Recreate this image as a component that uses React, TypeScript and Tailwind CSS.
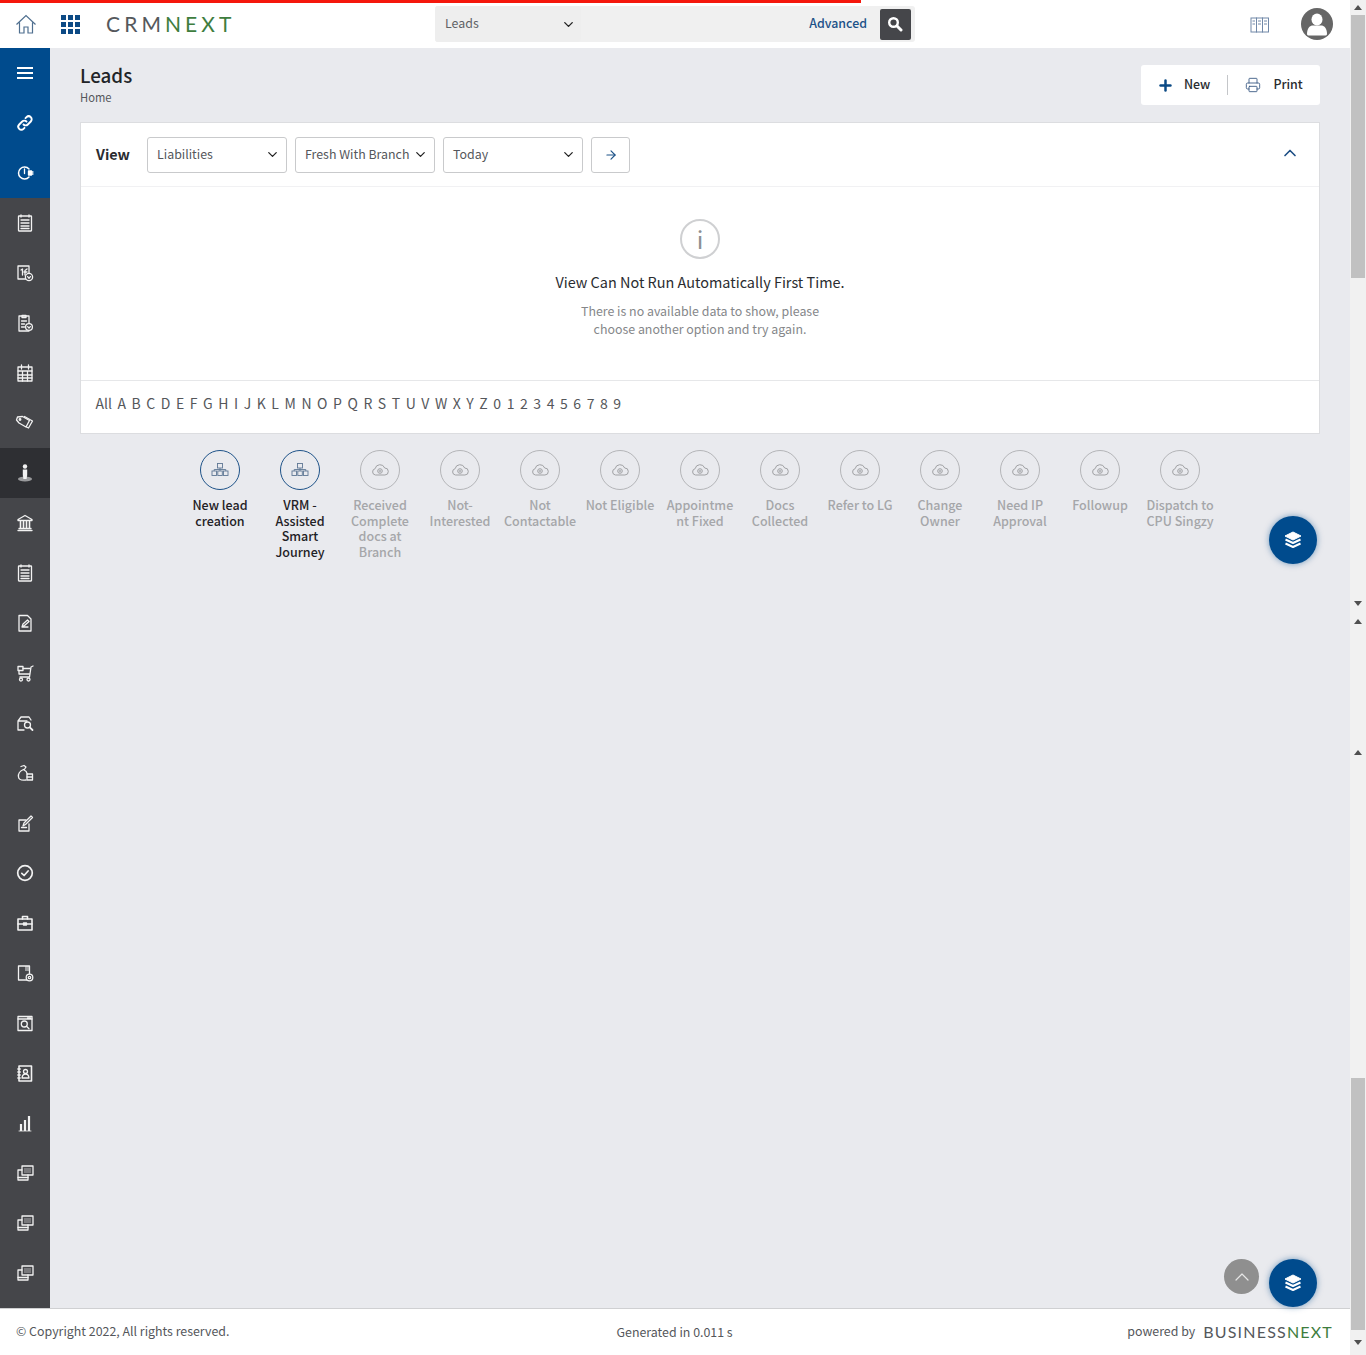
import { ReactNode } from 'react';
import { ChevronDown, ChevronUp, ArrowRight, Plus, Printer } from 'lucide-react';

const FONT = "font-['Noto_Sans_CJK_SC','Noto_Sans',sans-serif]";

// Sidebar glyphs, all on a 20x20 box
const Ico = ({ children, size = 20 }: { children: ReactNode; size?: number }) => (
  <svg width={size} height={size} viewBox="0 0 20 20" fill="none" stroke="currentColor" strokeWidth="1.3" strokeLinecap="round" strokeLinejoin="round">
    {children}
  </svg>
);

const listDoc = (
  <>
    <rect x="3.5" y="3" width="13" height="15" rx="0.5" />
    <path d="M6 2v2M14 2v2M6 7h8M6 10h8M6 13h8M6 15.5h8" />
  </>
);

const windows = (
  <>
    <rect x="7" y="3" width="11" height="9" />
    <path d="M7 7H3v10h10v-5" />
    <path d="M3 14.5h10" />
    <rect x="9" y="5" width="7" height="5" fill="currentColor" opacity="0.3" stroke="none" />
  </>
);

const SIDE_ICONS: ReactNode[] = [
  <><path d="M2 5h16M2 10h16M2 15h16" strokeWidth="2" strokeLinecap="butt" /></>,
  <><path d="M8.5 11.5a3 3 0 0 0 4.3 0l3-3a3 3 0 0 0-4.3-4.3l-1 1" strokeWidth="1.9" /><path d="M11.5 8.5a3 3 0 0 0-4.3 0l-3 3a3 3 0 0 0 4.3 4.3l1-1" strokeWidth="1.9" /></>,
  <><path d="M14 6a6 6 0 1 0 0 8" strokeWidth="1.5" /><path d="M9.5 6v4.5" /><rect x="13.5" y="8" width="3" height="4" fill="currentColor" /><path d="M17 9h1M17 11h1" /></>,
  listDoc,
  <><rect x="3" y="3" width="11" height="13" /><path d="M6 7l1.5-1v6M10 12V7.5l2-1.5M9 9h3" /><circle cx="14" cy="14" r="3.6" fill="#45464a" /><path d="M12.6 13.6l1.4 1.6 1.4-1.6" /></>,
  <><rect x="4" y="3" width="10" height="15" /><path d="M7 2.5h4v2H7zM6.5 8h5M6.5 11h3M6.5 14h3" /><circle cx="14" cy="14" r="3.4" fill="#45464a" /><path d="M12.7 13.6l1.3 1.5 1.3-1.5" /></>,
  <><rect x="3" y="4" width="14" height="14" /><path d="M6.5 2v4M13.5 2v4M3 8h14M7.5 8v10M12.5 8v10M3 12h14M3 15h14" /></>,
  <><path d="M1.500 7l1-3 5-.5 7 4-3.500 6.500-7-4z" /><path d="M9.500 3.500l8 4.500-4 7-2-1" /><circle cx="5" cy="6.500" r="0.800" /></>,
  <><circle cx="10" cy="3.500" r="2.200" fill="currentColor" stroke="none" /><path d="M7.800 6.500h4.400v5.500l-.6 4H8.400l-.6-4z" fill="currentColor" stroke="none" /><ellipse cx="10" cy="16" rx="7" ry="2.500" fill="currentColor" opacity="0.55" stroke="none" /></>,
  <><path d="M10 2.5L3 6.5v1h14v-1zM3 17.5h14M4 15.5h12" /><path d="M5.5 8.5v6M8.5 8.5v6M11.5 8.5v6M14.5 8.5v6" strokeWidth="1.6" /></>,
  listDoc,
  <><path d="M4 2.5h8.5L16 6v12H4z" /><path d="M7 14l1-3 4.5-4 1.5 1.5-4.5 4zM7 14h6" /></>,
  <><path d="M18 3l-2 1-1.500 10H5" /><rect x="3" y="3.500" width="5" height="4" /><path d="M8 5.500h7M4 7.500v3.500h10.500" /><circle cx="6" cy="16.500" r="1.500" /><circle cx="13.500" cy="16.500" r="1.500" /></>,
  <><path d="M3 8l3-4h8l2 3M3 8v9h6M3 8h9" /><circle cx="12.500" cy="12" r="3" /><path d="M14.800 14.300L17.500 17" strokeWidth="1.800" /></>,
  <><path d="M6 3.500l3-1 2 1.500-2 3c3 1 3 3 3.200 4M8.500 6.500C5 8 3 11 3.500 14c.5 3 4 3.500 7.500 3" /><rect x="12" y="11" width="5.500" height="6" /><path d="M12 14h5.500" /></>,
  <><path d="M4 7h7M4 7v11h10v-7" /><path d="M8 13l1-3 7-7 1.500 1.500-7 7z" /><path d="M6.500 14.500h5" /></>,
  <><circle cx="10" cy="10" r="7.300" strokeWidth="1.700" /><path d="M6.800 10.300l2.300 2.200 4-4.500" strokeWidth="1.700" /></>,
  <><rect x="3" y="6" width="14" height="11" strokeWidth="1.600" /><path d="M7.500 6V3.500h5V6M3 11h14" strokeWidth="1.600" /><rect x="8.500" y="10" width="3" height="2" fill="currentColor" /></>,
  <><rect x="3.500" y="3" width="11" height="14" /><rect x="10" y="3" width="4.500" height="5" fill="currentColor" opacity="0.5" stroke="none" /><circle cx="14.500" cy="14.500" r="3.300" fill="#45464a" /><circle cx="14.500" cy="14.500" r="1.200" /></>,
  <><rect x="3" y="3.500" width="14" height="14" /><path d="M3 6h14M12.500 4.800h3" /><circle cx="9.300" cy="11" r="3" /><path d="M11.500 13.200l2.500 2.500" /></>,
  <><rect x="4" y="3" width="12.500" height="15" strokeWidth="1.600" /><path d="M2.800 6h2.500M2.800 9h2.500M2.800 12h2.500M2.800 15h2.500" /><circle cx="10.500" cy="8.500" r="2" /><path d="M7 15c.3-3 1.500-4 3.500-4s3.200 1 3.500 4z" /></>,
  <><path d="M6 18V11M10 18V7M14 18V3" strokeWidth="2.200" strokeLinecap="butt" /><path d="M4 18h12" strokeWidth="0.800" /></>,
  windows,
  windows,
  windows,
];

const StatusIcon = ({ active }: { active: boolean }) =>
  active ? (
    <svg width="20" height="20" viewBox="0 0 20 20" fill="none" stroke="currentColor" strokeWidth="0.9">
      <rect x="7.500" y="3.500" width="5" height="4.500" />
      <rect x="2" y="11" width="4.500" height="4.500" />
      <rect x="7.800" y="11" width="4.500" height="4.500" />
      <rect x="13.500" y="11" width="4.500" height="4.500" />
      <path d="M10 8v3M4.200 11V9.500h11.600V11" />
    </svg>
  ) : (
    <svg width="20" height="20" viewBox="0 0 20 20" fill="none" stroke="currentColor" strokeWidth="1">
      <path d="M5.500 15a3.200 3.200 0 0 1-.4-6.300A5 5 0 0 1 14.700 8a3.500 3.500 0 0 1 .2 7z" />
      <circle cx="10" cy="11" r="2.300" />
      <path d="M10 9.800v2.400M8.800 11h2.400" strokeWidth="0.8" />
    </svg>
  );

const STATUSES = [
  { label: 'New lead creation', active: true },
  { label: 'VRM - Assisted Smart Journey', active: true },
  { label: 'Received Complete docs at Branch', active: false },
  { label: 'Not-Interested', active: false },
  { label: 'Not Contactable', active: false },
  { label: 'Not Eligible', active: false },
  { label: 'Appointment Fixed', active: false },
  { label: 'Docs Collected', active: false },
  { label: 'Refer to LG', active: false },
  { label: 'Change Owner', active: false },
  { label: 'Need IP Approval', active: false },
  { label: 'Followup', active: false },
  { label: 'Dispatch to CPU Singzy', active: false },
];

const ALPHA = ['All', ...'ABCDEFGHIJKLMNOPQRSTUVWXYZ0123456789'.split('')];

const LayersIcon = () => (
  <svg width="22" height="22" viewBox="0 0 22 22" fill="#fff" stroke="#fff" strokeWidth="1" strokeLinejoin="round">
    <path d="M11 3l8 4-8 4-8-4z" />
    <path d="M3.500 10.500L11 14l7.500-3.500" fill="none" strokeWidth="2" />
    <path d="M3.500 14.500L11 18l7.500-3.500" fill="none" strokeWidth="2" />
  </svg>
);

const Fab = ({ className }: { className: string }) => (
  <div className={`absolute flex h-12 w-12 items-center justify-center rounded-full bg-[#004b8d] shadow-[0_0_6px_rgba(0,75,141,0.5)] ${className}`}>
    <LayersIcon />
  </div>
);

const Select = ({ label, width }: { label: string; width: string }) => (
  <div className={`flex h-9 items-center justify-between whitespace-nowrap rounded-[3px] border border-[#c9cacc] bg-white pl-[9px] pr-[6px] text-[12.400px] text-[#55575b] ${width}`}>
    <span>{label}</span>
    <ChevronDown size={15} strokeWidth={2} className="text-[#222]" />
  </div>
);

const Arrow = ({ up }: { up: boolean }) => (
  <div className={`h-0 w-0 border-x-[4px] border-x-transparent ${up ? 'border-b-[5px] border-b-[#505050]' : 'border-t-[5px] border-t-[#505050]'}`} />
);

export default function App() {
  return (
    <div className={`relative flex h-[1355px] w-[1366px] overflow-hidden bg-white leading-normal ${FONT}`}>
      <div className="flex w-[1350px] flex-col">
        {/* Top bar */}
        <header className="relative flex h-12 items-center bg-white">
          <div className="absolute left-0 top-0 h-[3px] w-[861px] bg-[#f5170c]" />
          <svg width="22" height="22" viewBox="0 0 22 22" fill="none" stroke="#4f6f8f" strokeWidth="1.200" className="ml-[15px]">
            <path d="M1.500 11.500L11 2.500l9.500 9M4.500 9.500V20h4.500v-6h4v6h4.500V9.500" />
          </svg>
          <div className="ml-[24px] grid grid-cols-[repeat(3,5px)] gap-[2px]">
            {Array.from({ length: 9 }).map((_, i) => (
              <div key={i} className="h-[5px] w-[5px] bg-[#0d4a85]" />
            ))}
          </div>
          <div className="ml-[26px] flex -translate-y-px font-['Lato',sans-serif] text-[21px] font-normal leading-none tracking-[4.100px]">
            <span className="text-[#55585c]">CRM</span>
            <span className="text-[#3e7d3e]">NEXT</span>
          </div>
          <div className="absolute left-[435px] top-[6px] flex h-[36px] w-[480px] items-center rounded-[3px] bg-[#f0f0f0]">
            <div className="flex h-full w-[146px] items-center justify-between rounded-[3px] bg-[#eeeeee] pl-[10px] pr-[5px] text-[12.400px] text-[#606265]">
              <span className="-translate-y-px">Leads</span>
              <ChevronDown size={15} strokeWidth={2.200} className="text-[#222]" />
            </div>
            <span className="ml-auto -translate-y-px text-[12.400px] font-medium text-[#1d5288]">Advanced</span>
            <div className="ml-[13px] mr-[4px] flex h-[31px] w-[31px] items-center justify-center rounded-[2px] bg-[#45464a]">
              <svg width="16" height="16" viewBox="0 0 16 16" fill="none" stroke="#fff" strokeWidth="2.400" strokeLinecap="round" className="-ml-[2px]">
                <circle cx="6.500" cy="6.500" r="4.300" />
                <path d="M10 10l4 4" strokeWidth="3" />
              </svg>
            </div>
          </div>
          <svg width="20" height="16" viewBox="0 0 20 16" fill="none" stroke="#7088a8" strokeWidth="1" className="absolute left-[1250px] top-[17px]">
            <rect x="1" y="1" width="5.500" height="14" />
            <rect x="6.500" y="1" width="6" height="14" />
            <rect x="12.500" y="1" width="6" height="14" />
            <path d="M2.500 4h2.500M8 4h3M14 4h3M2.500 7h2.500M8 7h3M14 7h3" />
          </svg>
          <div className="absolute left-[1301px] top-[8px] flex h-8 w-8 items-center justify-center overflow-hidden rounded-full bg-[#666666]">
            <svg width="32" height="32" viewBox="0 0 32 32" fill="#fff">
              <ellipse cx="16" cy="11.500" rx="5.500" ry="6" />
              <path d="M6 26c0-6 3-8.500 6-8.500h8c3 0 6 2.500 6 8.500 0 1-1 1.500-2 1.500H8c-1 0-2-.5-2-1.500z" />
            </svg>
          </div>
        </header>

        <div className="flex min-h-0 flex-1">
          {/* Sidebar */}
          <aside className="flex w-[50px] flex-col bg-[#45464a] text-[#f2f2f2]">
            {SIDE_ICONS.map((ic, i) => (
              <div
                key={i}
                className={`flex h-[50px] shrink-0 items-center justify-center ${i < 3 ? 'bg-[#004b8d] text-white' : ''} ${i === 8 ? 'bg-[#2e2f33]' : ''}`}
              >
                <Ico>{ic}</Ico>
              </div>
            ))}
          </aside>

          {/* Main */}
          <main className="relative flex-1 bg-[#e9eaee] px-[30px]">
            <div className="flex h-[74px] items-start justify-between">
              <div className="pt-[13px]">
                <h1 className="text-[18.800px] font-medium leading-[27px] text-[#222428]">Leads</h1>
                <p className="mt-[1px] text-[11.200px] leading-[16px] text-[#55575b]">Home</p>
              </div>
              <div className="mt-[17px] flex h-10 w-[179px] items-center rounded-[3px] bg-white pl-[16px] text-[12.400px] font-medium text-[#2a2c30]">
                <Plus size={17} strokeWidth={3.500} className="text-[#0b4a85]" />
                <span className="ml-[10px] -translate-y-px">New</span>
                <div className="ml-[17px] h-5 w-px bg-[#c4c6c9]" />
                <Printer size={16} strokeWidth={1.300} className="ml-[17px] text-[#34557f]" />
                <span className="ml-[12px] -translate-y-px">Print</span>
              </div>
            </div>

            <section className="h-[312px] border border-[#dcdde0] bg-white">
              <div className="flex h-[64px] items-center border-b border-[#f1f1f3] pl-[15px] pr-[19px]">
                <span className="mr-[17px] -translate-y-px text-[14.400px] font-bold text-[#2a2c30]">View</span>
                <div className="flex gap-2">
                  <Select label="Liabilities" width="w-[140px]" />
                  <Select label="Fresh With Branch" width="w-[140px]" />
                  <Select label="Today" width="w-[140px]" />
                  <div className="flex h-9 w-[39px] items-center justify-center rounded-[3px] border border-[#c9cacc]">
                    <ArrowRight size={14} strokeWidth={2} className="text-[#1d5288]" />
                  </div>
                </div>
                <ChevronUp size={20} strokeWidth={2} className="ml-auto -translate-y-[2px] text-[#1d4e85]" />
              </div>
              <div className="flex h-[194px] flex-col items-center border-b border-[#e6e7e9] pt-[32px]">
                <div className="flex h-10 w-10 items-center justify-center rounded-full border-2 border-[#cfd0d2] text-[24px] leading-none text-[#8d8f92]">
                  i
                </div>
                <p className="mt-[12px] text-[14.450px] leading-[22px] text-[#2a2c30]">View Can Not Run Automatically First Time.</p>
                <p className="mt-[9px] w-[260px] text-center text-[12.400px] leading-[18px] text-[#85878a]">
                  There is no available data to show, please choose another option and try again.
                </p>
              </div>
              <div className="flex h-[44px] items-center gap-[5.550px] pl-[14.500px] text-sm leading-[20px] text-[#55575b]">
                {ALPHA.map((a) => (
                  <span key={a}>{a}</span>
                ))}
              </div>
            </section>

            <div className="mt-4 flex justify-center">
              {STATUSES.map((s) => (
                <div key={s.label} className="flex w-[80px] flex-col items-center">
                  <div
                    className={`flex h-10 w-10 items-center justify-center rounded-full border ${
                      s.active ? 'border-[#1d5288] text-[#5f7894]' : 'border-[#b4b5b8] text-[#a0a1a4]'
                    }`}
                  >
                    <StatusIcon active={s.active} />
                  </div>
                  <p
                    className={`mt-[7px] w-[72.500px] text-center text-[12.500px] font-medium leading-[15.500px] [overflow-wrap:anywhere] ${
                      s.active ? 'text-[#1f2125]' : 'text-[#a5a6a9]'
                    }`}
                  >
                    {s.label}
                  </p>
                </div>
              ))}
            </div>

            <Fab className="left-[1219px] top-[468px]" />
            <div className="absolute left-[1174px] top-[1211px] flex h-[35px] w-[35px] items-center justify-center rounded-full bg-[#8f8f8f]">
              <ChevronUp size={24} strokeWidth={1.200} className="text-[#e6e6e6]" />
            </div>
            <Fab className="left-[1219px] top-[1211px]" />
          </main>
        </div>

        {/* Footer */}
        <footer className="flex h-[47px] items-center border-t border-[#cfd0d2] bg-white pl-4 pr-[17px] text-[12.400px] leading-[20px] text-[#55575b]">
          <span className="w-[600.500px] -translate-y-px">© Copyright 2022, All rights reserved.</span>
          <span>Generated in 0.011 s</span>
          <span className="ml-auto -translate-y-px">powered by</span>
          <span className="ml-2 font-['Lato',sans-serif] text-base tracking-[1.200px]">
            <span className="text-[#55585c]">BUSINESS</span>
            <span className="text-[#3e7d3e]">NEXT</span>
          </span>
        </footer>
      </div>

      {/* Scrollbars */}
      <div className="flex w-4 flex-col bg-[#f1f1f1]">
        <div className="flex h-[15px] items-center justify-center"><Arrow up /></div>
        <div className="mx-[1px] h-[263px] bg-[#c1c1c1]" />
        <div className="flex h-[328px] items-end justify-center"><Arrow up={false} /></div>
        <div className="flex h-[30px] items-center justify-center"><Arrow up /></div>
        <div className="flex h-[119px] items-end justify-center"><Arrow up /></div>
        <div className="h-[323px]" />
        <div className="mx-[1px] h-[252px] bg-[#c1c1c1]" />
        <div className="flex flex-1 items-center justify-center"><Arrow up={false} /></div>
      </div>
    </div>
  );
}
